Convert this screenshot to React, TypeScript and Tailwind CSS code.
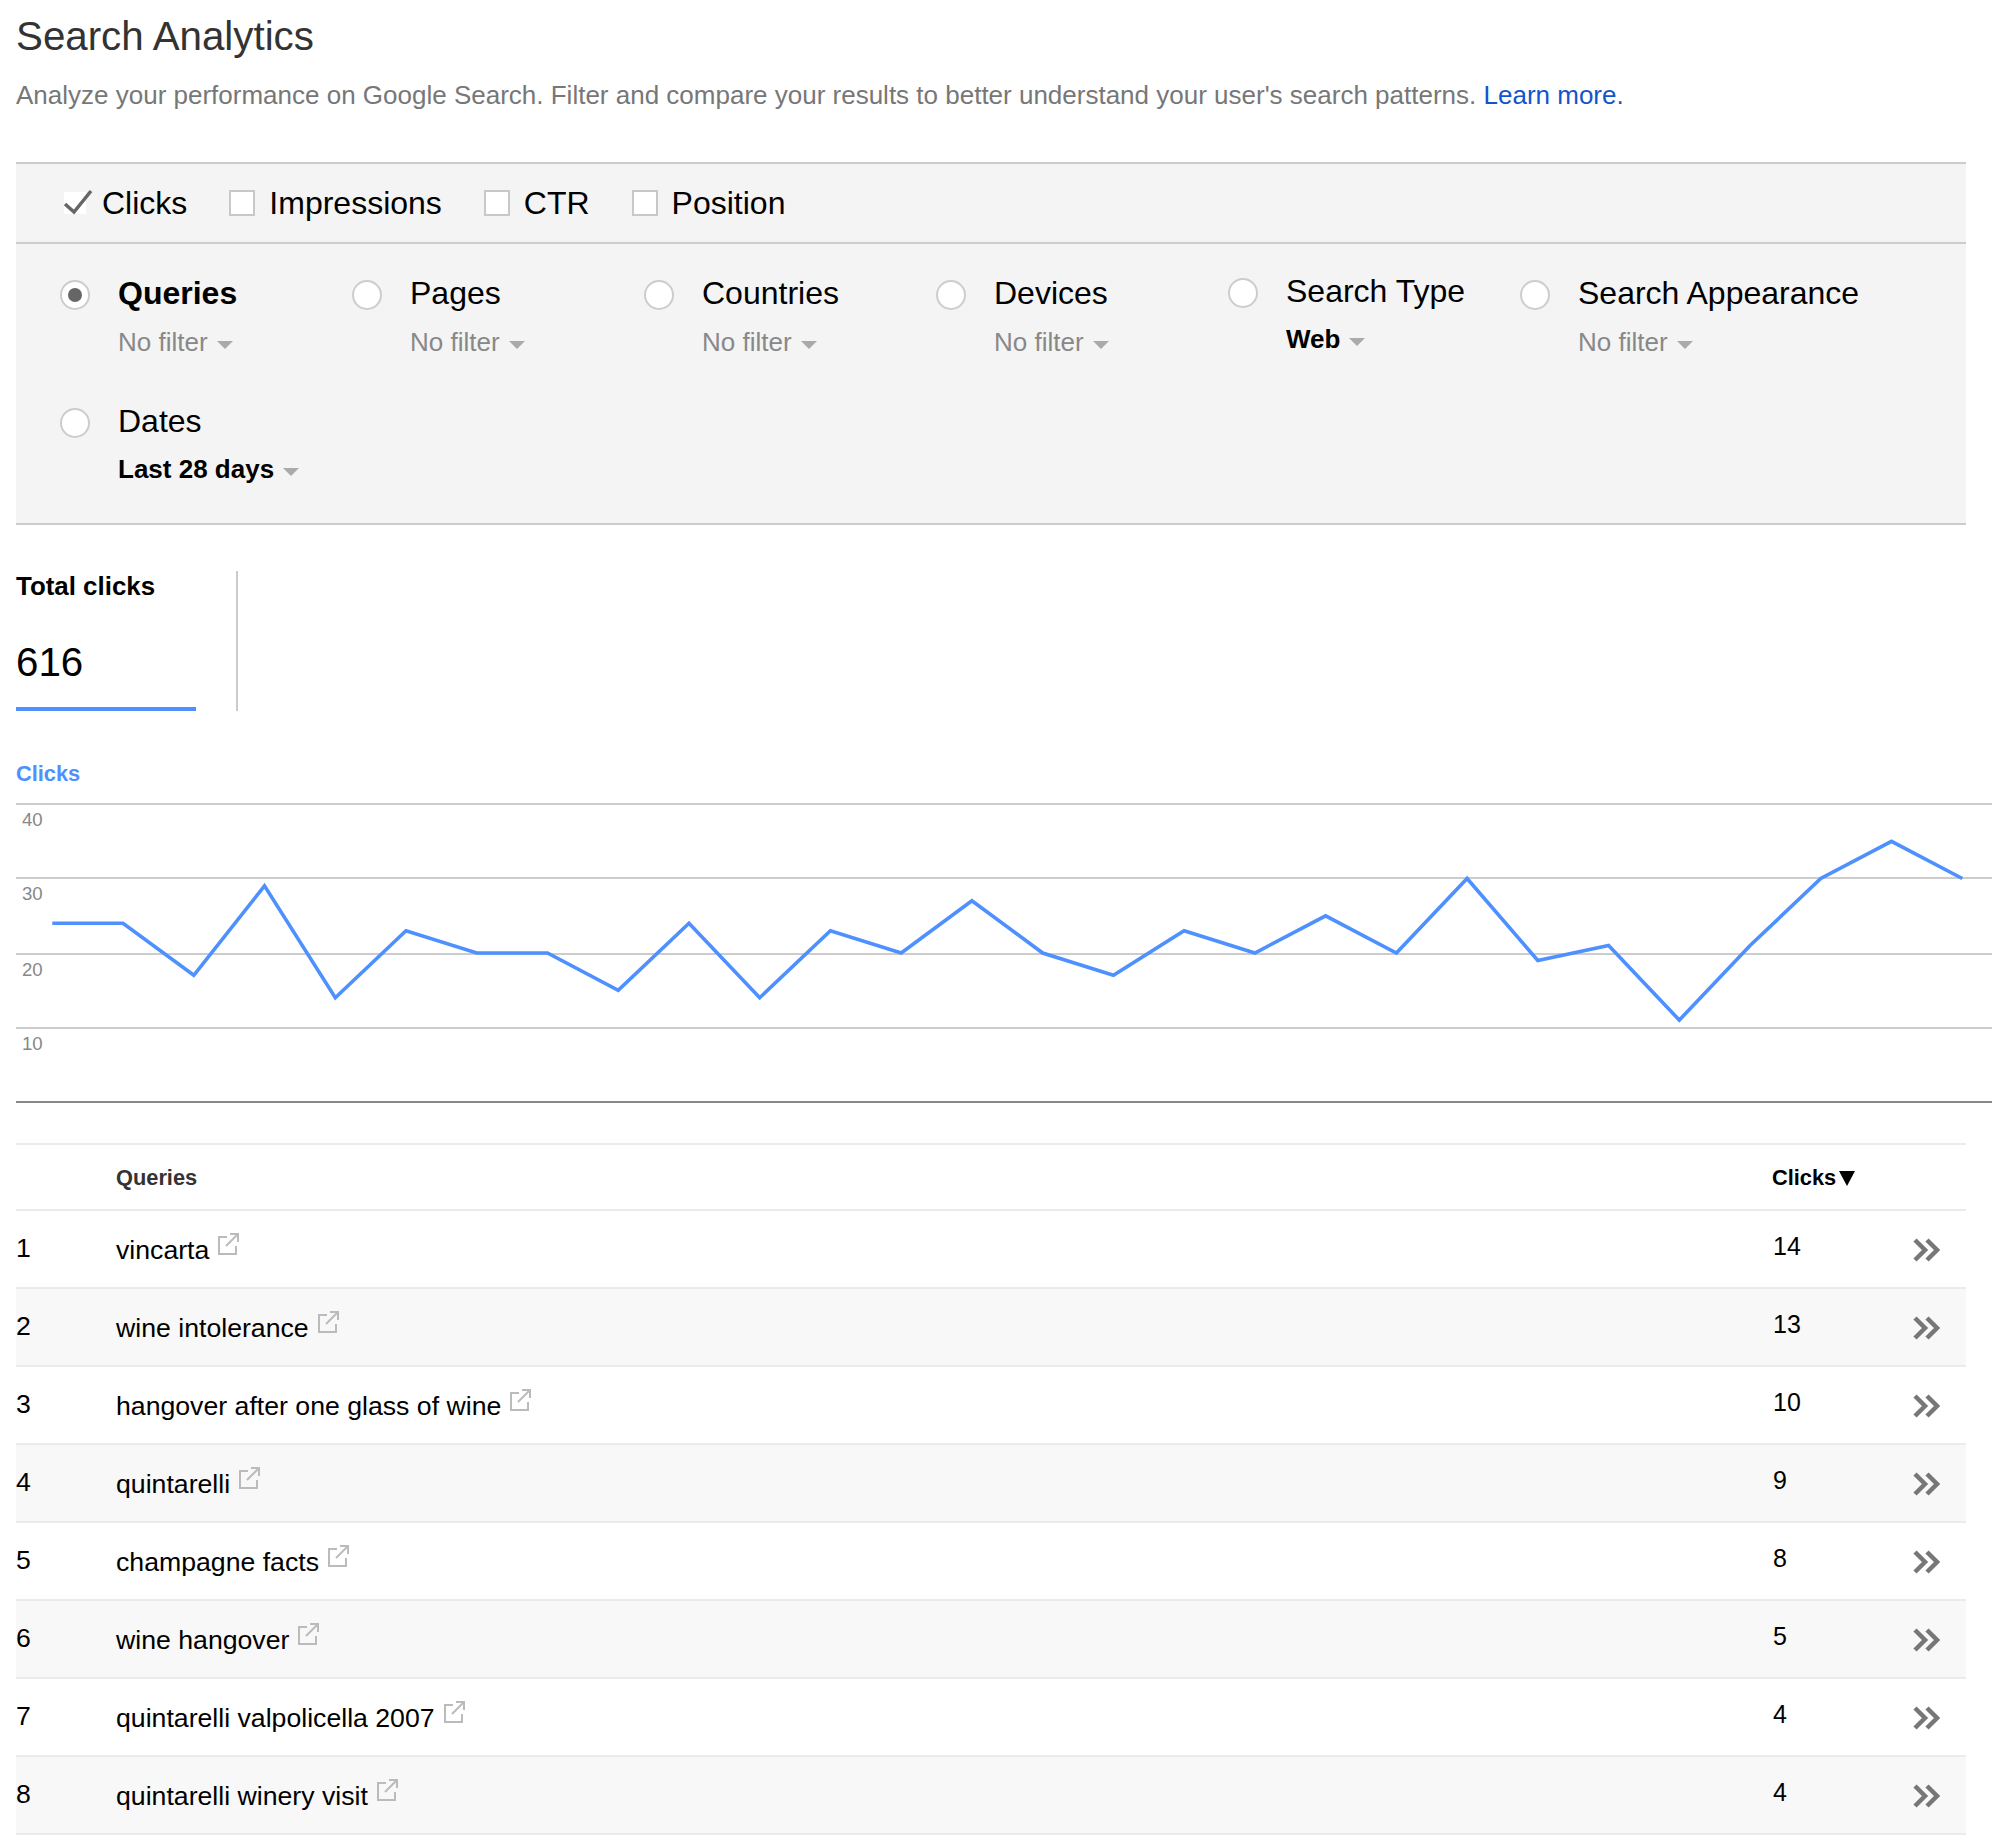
const METRICS = ["Impressions", "CTR", "Position"];

type Dim = { name: string; sub: string; bold?: boolean; active?: boolean; shifted?: boolean };

const DIMENSIONS: Dim[] = [
  { name: "Queries", sub: "No filter", active: true },
  { name: "Pages", sub: "No filter" },
  { name: "Countries", sub: "No filter" },
  { name: "Devices", sub: "No filter" },
  { name: "Search Type", sub: "Web", bold: true, shifted: true },
  { name: "Search Appearance", sub: "No filter" },
  { name: "Dates", sub: "Last 28 days", bold: true },
];

const CLICKS = [24, 24, 17, 29, 14, 23, 20, 20, 15, 24, 14, 23, 20, 27, 20, 17, 23, 20, 25, 20, 30, 19, 21, 11, 21, 30, 35, 30];

const BANDS: [string, string][] = [
  ["40", "h-[74px]"],
  ["30", "h-[76px]"],
  ["20", "h-[74px]"],
  ["10", "h-[74px]"],
];

const ROWS: [string, number][] = [
  ["vincarta", 14],
  ["wine intolerance", 13],
  ["hangover after one glass of wine", 10],
  ["quintarelli", 9],
  ["champagne facts", 8],
  ["wine hangover", 5],
  ["quintarelli valpolicella 2007", 4],
  ["quintarelli winery visit", 4],
];

function Caret() {
  return <span className="ml-[9px] inline-block h-0 w-0 border-x-[8px] border-t-[8px] border-x-transparent border-t-[#aaaaaa] align-[2px]" />;
}

function Radio({ on }: { on?: boolean }) {
  return (
    <span className="mt-[4px] flex h-[30px] w-[30px] shrink-0 items-center justify-center rounded-full border-2 border-[#cccccc] bg-white">
      {on ? <span className="h-[14px] w-[14px] rounded-full bg-[#666666]" /> : null}
    </span>
  );
}

function ExternalIcon() {
  return (
    <svg width="22" height="22" viewBox="0 0 22 22" fill="none" stroke="#bbbbbb" strokeWidth="2" className="ml-[8px] -mt-[13px] shrink-0">
      <path d="M10 4H2v17h17v-8" />
      <path d="M9 13 20 2" />
      <path d="M13 1h8v8" />
    </svg>
  );
}

function Chevrons() {
  return (
    <svg width="27" height="24" viewBox="0 0 27 24" fill="none" stroke="#777777" strokeWidth="4.5">
      <path d="M2 2l10 10L2 22" />
      <path d="M14 2l10 10-10 10" />
    </svg>
  );
}

export default function App() {
  const points = CLICKS.map((v, i) => `${(36.3 + i * 70.74).toFixed(1)},${(299 - v * 7.45).toFixed(1)}`).join(" ");

  return (
    <div className="min-h-[1836px] w-[1992px] overflow-hidden bg-white pl-[16px] text-black [font-family:'Liberation_Sans',Arial,sans-serif]">
      <h1 className="pt-[14px] text-[40.3px] leading-[46px] font-normal text-[#333333]">Search Analytics</h1>
      <p className="mt-[20px] text-[26px] leading-[30px] text-[#777777]">
        Analyze your performance on Google Search. Filter and compare your results to better understand your user's search patterns.{" "}
        <a className="text-[#1155cc]">Learn more.</a>
      </p>

      <div className="mt-[52px] w-[1950px] border-t-2 border-[#cccccc] bg-[#f4f4f4]">
        <div className="flex h-[78px] items-center pl-[47px] text-[32px]">
          <div className="flex items-center">
            <span className="relative ml-[1px] h-[22px] w-[22px] bg-white">
              <svg width="30" height="28" viewBox="0 0 30 28" fill="none" stroke="#666666" strokeWidth="3.5" className="absolute -top-[3px] left-0 overflow-visible">
                <path d="M1 15l9 8L27 2" />
              </svg>
            </span>
            <span className="ml-[16px]">Clicks</span>
          </div>
          {METRICS.map((m) => (
            <div key={m} className="ml-[42px] flex items-center">
              <span className="h-[26px] w-[26px] border-2 border-[#c8c8c8] bg-white" />
              <span className="ml-[14px]">{m}</span>
            </div>
          ))}
        </div>
        <div className="grid h-[283px] auto-rows-[128px] grid-cols-[repeat(6,292px)] border-y-2 border-[#cccccc] pt-[32px] pl-[44px]">
          {DIMENSIONS.map((d) => (
            <div key={d.name} className={d.shifted ? "-mt-[2px] flex gap-[28px]" : "flex gap-[28px]"}>
              <Radio on={d.active} />
              <div>
                <div className={d.active ? "text-[32px] leading-[34px] font-bold" : "whitespace-nowrap text-[32px] leading-[34px]"}>{d.name}</div>
                <div
                  className={`${d.bold ? "mt-[16px]" : "mt-[17px]"} text-[26px] leading-[30px] ${
                    d.bold ? "font-bold" : "text-[#888888]"
                  } whitespace-nowrap`}
                >
                  {d.sub}
                  <Caret />
                </div>
              </div>
            </div>
          ))}
        </div>
      </div>

      <div className="mt-[46px] flex h-[140px]">
        <div className="flex w-[180px] flex-col">
          <div className="text-[25.9px] leading-[30px] font-bold">Total clicks</div>
          <div className="mt-[38px] text-[40.3px] leading-[48px]">616</div>
          <div className="mt-auto h-[4px] bg-[#4d90fe]" />
        </div>
        <div className="ml-[40px] w-[2px] bg-[#cccccc]" />
      </div>

      <div className="mt-[50px] text-[21.8px] leading-[26px] font-bold text-[#4d90fe]">Clicks</div>

      <div className="relative mt-[16px]">
        {BANDS.map(([label, height]) => (
          <div key={label} className={`${height} border-t-2 border-[#cccccc] pt-[3px] pl-[6px] text-[18.6px] leading-[24px] text-[#888888]`}>
            {label}
          </div>
        ))}
        <div className="h-[2px] bg-[#888888]" />
        <svg width="1976" height="304" viewBox="0 0 1976 304" fill="none" className="absolute top-0 left-0">
          <polyline points={points} stroke="#4d90fe" strokeWidth="3.6" strokeLinejoin="miter" />
        </svg>
      </div>

      <div className="mt-[40px] w-[1950px] border-t-2 border-[#ebebeb]">
        <div className="flex h-[66px] items-center border-b-2 border-[#ebebeb] pt-[2px] text-[21.8px] font-bold">
          <div className="w-[100px] shrink-0" />
          <div className="flex-1 text-[#333333]">Queries</div>
          <div className="flex w-[194px] shrink-0 items-center whitespace-nowrap">
            Clicks
            <span className="ml-[3px] h-0 w-0 border-x-[8px] border-t-[15px] border-x-transparent border-t-black" />
          </div>
        </div>
        {ROWS.map(([query, clicks], i) => (
          <div key={query} className={`flex h-[78px] items-center border-b-2 border-[#ebebeb] text-[26.67px] ${i % 2 === 1 ? "bg-[#f8f8f8]" : "bg-white"}`}>
            <div className="w-[100px] shrink-0 -translate-y-[1px]">{i + 1}</div>
            <div className="flex flex-1 translate-y-[1px] items-center">
              <span>{query}</span>
              <ExternalIcon />
            </div>
            <div className="w-[141px] shrink-0 -translate-y-[2px] pl-[1px] text-[25px]">{clicks}</div>
            <div className="flex w-[53px] shrink-0 translate-y-[1px] items-center">
              <Chevrons />
            </div>
          </div>
        ))}
      </div>
    </div>
  );
}
